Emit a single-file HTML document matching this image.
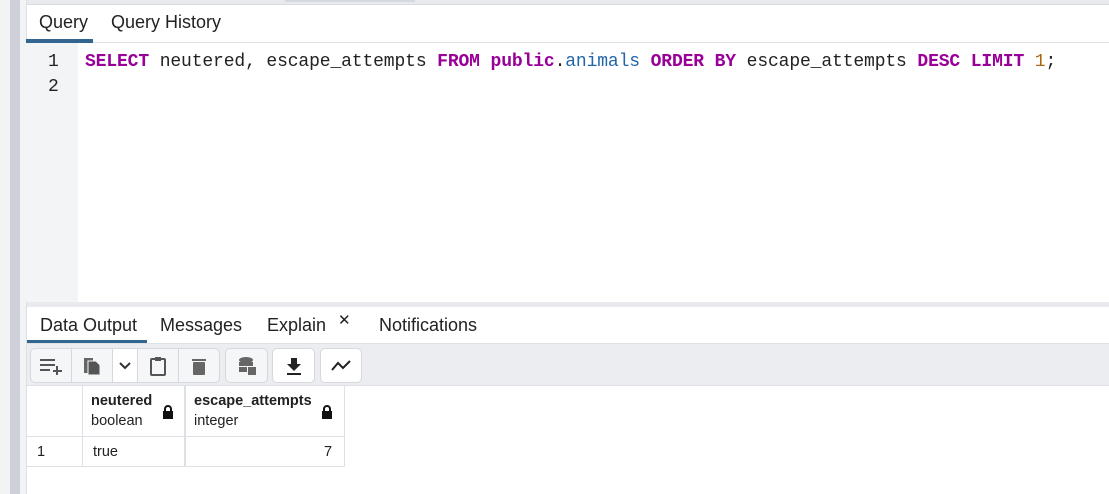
<!DOCTYPE html>
<html><head><style>
*{margin:0;padding:0;box-sizing:border-box}
body{width:1109px;height:494px;overflow:hidden;background:#fff;font-family:"Liberation Sans",sans-serif;position:relative;color:#222}
.a{position:absolute}
.mono{font-family:"Liberation Mono",monospace;font-size:18px;letter-spacing:-0.13px}
.k{color:#990099;font-weight:bold}
.tab{position:absolute;font-size:18px;color:#222}
.btn{position:absolute;top:348px;height:35px;border:1px solid #d5d8de;background:#f5f6f8}
.btn svg{position:absolute;left:50%;top:50%;transform:translate(-50%,-50%)}
</style></head><body>
<div class="a" style="left:0;top:0;width:10px;height:494px;background:#f2f3f5"></div>
<div class="a" style="left:10px;top:0;width:10px;height:494px;background:#cdd0d9"></div>
<div class="a" style="left:20px;top:0;width:6px;height:494px;background:#f2f3f5"></div>
<div class="a" style="left:26px;top:0;width:1px;height:494px;background:#dde0e5"></div>
<div class="a" style="left:27px;top:0;width:1082px;height:5px;background:#e8eaee;border-bottom:1px solid #d8dbe0"></div>
<div class="a" style="left:285px;top:0;width:130px;height:2px;background:#d5d8de"></div>
<div class="tab" style="left:39px;top:12px">Query</div>
<div class="tab" style="left:111px;top:12px">Query History</div>
<div class="a" style="left:26px;top:39px;width:67px;height:4px;background:#326690"></div>
<div class="a" style="left:93px;top:42px;width:1016px;height:1px;background:#dde0e5"></div>
<div class="a" style="left:26px;top:43px;width:52px;height:259px;background:#f3f4f6"></div>
<div class="a mono" style="left:48px;top:50px;line-height:25px;color:#222">1<br>2</div>
<div class="a mono" style="left:85px;top:50px;line-height:25px;white-space:pre;color:#222"><span class="k">SELECT</span> neutered, escape_attempts <span class="k">FROM</span> <span class="k">public</span>.<span style="color:#2266aa">animals</span> <span class="k">ORDER BY</span> escape_attempts <span class="k">DESC</span> <span class="k">LIMIT</span> <span style="color:#aa6611">1</span>;</div>
<div class="a" style="left:27px;top:302px;width:1082px;height:5px;background:#e8eaee"></div>
<div class="tab" style="left:40px;top:315px">Data Output</div>
<div class="tab" style="left:160px;top:315px">Messages</div>
<div class="tab" style="left:267px;top:315px">Explain</div>
<div class="a" style="left:338px;top:311px;font-size:15px">✕</div>
<div class="tab" style="left:379px;top:315px">Notifications</div>
<div class="a" style="left:27px;top:340px;width:120px;height:3px;background:#326690"></div>
<div class="a" style="left:27px;top:343px;width:1082px;height:43px;background:#ebedf0;border-top:1px solid #dde0e5;border-bottom:1px solid #dde0e5"></div>
<div class="btn" style="left:30px;width:42px;border-radius:5px 0 0 5px"><svg width="24" height="18"><path d="M1 3h15M1 8h15M1 13h10M18 9v9M14 14h9" stroke="#555" stroke-width="2" fill="none"/></svg></div>
<div class="btn" style="left:71px;width:42px"><svg width="18" height="20"><path d="M1 2h9v15H1z" fill="#666"/><path d="M5 5h8l4 4v10H5z" fill="#555" stroke="#f5f6f8" stroke-width="1"/></svg></div>
<div class="btn" style="left:112px;width:26px;background:#fff"><svg width="12" height="8"><path d="M1 1l5 5 5-5" stroke="#333" stroke-width="2" fill="none"/></svg></div>
<div class="btn" style="left:137px;width:42px"><svg width="16" height="20"><rect x="1" y="3" width="14" height="16" rx="1" stroke="#555" stroke-width="2" fill="none"/><rect x="5" y="1" width="6" height="4" fill="#555"/></svg></div>
<div class="btn" style="left:178px;width:42px;border-radius:0 5px 5px 0"><svg width="14" height="18"><rect x="0" y="2" width="14" height="2" fill="#666"/><rect x="1" y="5" width="12" height="13" rx="1" fill="#666"/></svg></div>
<div class="btn" style="left:225px;width:43px;border-radius:5px"><svg width="18" height="20"><ellipse cx="8" cy="4" rx="7" ry="3" fill="#666"/><rect x="1" y="6" width="14" height="4" fill="#666"/><rect x="1" y="11" width="8" height="5" fill="#666"/><rect x="10" y="11" width="8" height="8" fill="#666"/></svg></div>
<div class="btn" style="left:272px;width:43px;border-radius:5px;background:#fff"><svg width="16" height="18"><path d="M5 1h6v6h4l-7 7-7-7h4z" fill="#222"/><rect x="1" y="16" width="14" height="2" fill="#222"/></svg></div>
<div class="btn" style="left:320px;width:42px;border-radius:5px;background:#fff"><svg width="22" height="14"><path d="M2 11l6-7 5 5 7-7" stroke="#222" stroke-width="2" fill="none"/></svg></div>
<div class="a" style="left:27px;top:386px;width:318px;height:81px;border-bottom:1px solid #dde0e5"></div>
<div class="a" style="left:82px;top:386px;width:1px;height:81px;background:#dde0e5"></div>
<div class="a" style="left:184px;top:386px;width:2px;height:81px;background:#dde0e5"></div>
<div class="a" style="left:344px;top:386px;width:1px;height:81px;background:#dde0e5"></div>
<div class="a" style="left:27px;top:436px;width:318px;height:1px;background:#dde0e5"></div>
<div class="a" style="left:91px;top:393px;font-size:14.5px;font-weight:bold">neutered</div>
<div class="a" style="left:91px;top:413px;font-size:14.5px">boolean</div>
<div class="a" style="left:194px;top:393px;font-size:14.5px;font-weight:bold">escape_attempts</div>
<div class="a" style="left:194px;top:413px;font-size:14.5px">integer</div>
<svg class="a" style="left:162px;top:405px" width="12" height="15"><path d="M3 6V4a3 3 0 0 1 6 0v2" stroke="#111" stroke-width="2" fill="none"/><rect x="1" y="6" width="10" height="8" fill="#111"/></svg>
<svg class="a" style="left:321px;top:405px" width="12" height="15"><path d="M3 6V4a3 3 0 0 1 6 0v2" stroke="#111" stroke-width="2" fill="none"/><rect x="1" y="6" width="10" height="8" fill="#111"/></svg>
<div class="a" style="left:37px;top:444px;font-size:14.5px">1</div>
<div class="a" style="left:93px;top:444px;font-size:14.5px">true</div>
<div class="a" style="left:324px;top:444px;font-size:14.5px">7</div>
</body></html>
